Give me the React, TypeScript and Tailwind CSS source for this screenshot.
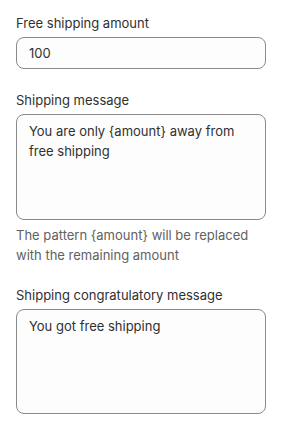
import React from "react";

export default function App() {
  const font = { fontFamily: "Inter, 'Noto Sans', sans-serif" };
  return (
    <div className="w-[282px] h-[430px] bg-white px-4 pt-[13px] text-[13px] leading-5 text-[#303030]" style={font}>
      <div className="flex flex-col">
        <label className="block h-5">Free shipping amount</label>
        <div className="mt-1 h-[32px] w-[250px] rounded-[8px] border border-[#8a8a8a] bg-[#fdfdfd] px-3 flex items-center">
          100
        </div>
      </div>
      <div className="mt-[21px] flex flex-col">
        <label className="block h-5">Shipping message</label>
        <div className="mt-1 h-[106px] w-[250px] rounded-[8px] border border-[#8a8a8a] bg-[#fdfdfd] px-3 pt-[6px]">
          You are only {"{amount}"} away from free shipping
        </div>
        <p className="mt-[5px] text-[#616161]">
          The pattern {"{amount}"} will be replaced with the remaining amount
        </p>
      </div>
      <div className="mt-5 flex flex-col">
        <label className="block h-5">Shipping congratulatory message</label>
        <div className="mt-1 h-[105px] w-[250px] rounded-[8px] border border-[#8a8a8a] bg-[#fdfdfd] px-3 pt-[6px]">
          You got free shipping
        </div>
      </div>
    </div>
  );
}
